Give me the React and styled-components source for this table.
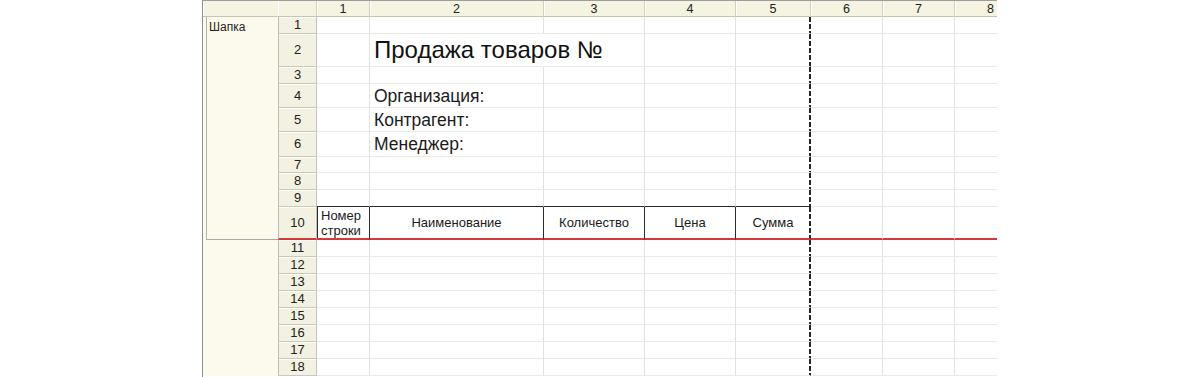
import React from 'react';
import styled, { createGlobalStyle, css } from 'styled-components';

const GlobalStyle = createGlobalStyle`
  *, *::before, *::after { box-sizing: border-box; }
  html, body { margin: 0; padding: 0; background: #ffffff; }
  body { font-family: "Liberation Sans", Arial, sans-serif; }
`;

const GRID_V = '#e2e2e2';
const GRID_H = '#eaeaea';
const TABLE = '#2b2b2b';
const RED = '#d23a3a';

const Page = styled.div`
  display: flex;
  padding-left: 202px;
  height: 377px;
  overflow: hidden;
`;

const Sheet = styled.div`
  width: 795px;
  height: 377px;
  overflow: hidden;
  display: grid;
  grid-template-columns: 75px 39px 53px 174px 101px 91px 75px 72px 72px 72px;
  grid-template-rows: ${(p) => p.$rows};
  border-left: 1px solid #8e8e8e;
  border-top: 1px solid #9c9c9c;
  font-family: "Liberation Sans", Arial, sans-serif;
  color: #1b1b1b;
`;

const HeadCell = styled.div`
  display: flex;
  align-items: center;
  justify-content: center;
  background: #f5f3e1;
  border-bottom: 1px solid #c6c3ae;
  border-right: 1px solid ${(p) => (p.$plain ? '#f5f3e1' : '#d3d0bb')};
  box-shadow: inset 1px 0 0 #ffffff;
  font-size: 12.5px;
  line-height: 14px;
  color: #222;
  white-space: nowrap;
  overflow: hidden;
`;

const GroupCell = styled.div`
  grid-column: 1;
  grid-row: ${(p) => p.$rows};
  display: flex;
  background: #fcfaec;
  padding-left: 3px;
`;

const GroupFrame = styled.div`
  flex: 1;
  border-left: 1px solid #b3b3b3;
  border-bottom: 1px solid #a9a9a9;
  padding: 3px 2px;
  font-size: 12px;
  line-height: 14px;
  color: #222;
`;

const RowHead = styled.div`
  grid-column: 2;
  display: flex;
  align-items: center;
  justify-content: center;
  background: #f3f1e1;
  border-left: 1px solid #bdbdbd;
  border-right: 1px solid #c2c2c2;
  border-bottom: ${(p) => (p.$red ? `2px solid ${RED}` : '1px solid #cbc8b6')};
  box-shadow: inset 0 1px 0 #ffffff;
  font-size: 13px;
  line-height: 14px;
  color: #222;
`;

const Cell = styled.div`
  display: flex;
  align-items: center;
  justify-content: ${(p) => (p.$center ? 'center' : 'flex-start')};
  text-align: ${(p) => (p.$center ? 'center' : 'left')};
  padding: 0 4px;
  white-space: nowrap;
  min-width: 0;
  border-right: 1px solid ${(p) => p.$rightColor || GRID_V};
  border-bottom: ${(p) => (p.$red ? `2px solid ${RED}` : `1px solid ${p.$bottomColor || GRID_H}`)};
  ${(p) =>
    p.$dashed &&
    css`
      border-right-color: transparent;
      background-image: repeating-linear-gradient(
        to bottom,
        #262626 0 5px,
        transparent 5px 7px
      );
      background-size: 2px 100%;
      background-position: right top;
      background-repeat: no-repeat;
      background-origin: border-box;
    `}
  ${(p) =>
    p.$tableLeft &&
    css`
      box-shadow: inset 1px 0 0 ${TABLE};
    `}
`;

const Title = styled.span`
  font-size: 24px;
  line-height: 26px;
  color: #111;
`;

const Label = styled.span`
  font-size: 17.5px;
  line-height: 20px;
  color: #1b1b1b;
`;

const TableHead = styled.span`
  font-size: 13px;
  line-height: 15px;
  color: #1b1b1b;
  white-space: normal;
`;

const ROWS = [
  { n: 1, h: 17 },
  { n: 2, h: 33, title: 'Продажа товаров №' },
  { n: 3, h: 17 },
  { n: 4, h: 24, label: 'Организация:' },
  { n: 5, h: 24, label: 'Контрагент:' },
  { n: 6, h: 25, label: 'Менеджер:' },
  { n: 7, h: 16 },
  { n: 8, h: 17 },
  { n: 9, h: 17, aboveTable: true },
  {
    n: 10,
    h: 33,
    table: ['Номер\nстроки', 'Наименование', 'Количество', 'Цена', 'Сумма'],
  },
  ...Array.from({ length: 8 }, (_, i) => ({ n: 11 + i, h: 17 })),
];

const COLS = [1, 2, 3, 4, 5, 6, 7, 8];

function renderCell(row, col) {
  const key = `${row.n}-${col}`;
  const inTable = col <= 5;
  const props = {};
  if (col === 5) props.$dashed = true;

  if (row.aboveTable && inTable) props.$bottomColor = TABLE;

  if (row.table) {
    props.$red = true;
    if (inTable) {
      if (col !== 5) props.$rightColor = TABLE;
      if (col === 1) props.$tableLeft = true;
      const text = row.table[col - 1];
      if (col === 1) {
        return (
          <Cell key={key} {...props}>
            <TableHead>
              {text.split('\n').map((t, i) => (
                <React.Fragment key={i}>
                  {i > 0 && <br />}
                  {t}
                </React.Fragment>
              ))}
            </TableHead>
          </Cell>
        );
      }
      return (
        <Cell key={key} $center {...props}>
          <TableHead>{text}</TableHead>
        </Cell>
      );
    }
    return <Cell key={key} {...props} />;
  }

  if (row.title && col === 2) {
    return (
      <Cell key={key} {...props} $rightColor="transparent">
        <Title>{row.title}</Title>
      </Cell>
    );
  }
  if (row.label && col === 2) {
    return (
      <Cell key={key} {...props}>
        <Label>{row.label}</Label>
      </Cell>
    );
  }
  return <Cell key={key} {...props} />;
}

export default function App() {
  const rowTemplate = ['16px', ...ROWS.map((r) => `${r.h}px`)].join(' ');
  return (
    <>
      <GlobalStyle />
      <Page>
        <Sheet $rows={rowTemplate}>
          <HeadCell $plain style={{ gridColumn: 1 }} />
          <HeadCell />
          {COLS.map((c) => (
            <HeadCell key={`h${c}`}>{c}</HeadCell>
          ))}
          <GroupCell $rows="2 / span 10">
            <GroupFrame>Шапка</GroupFrame>
          </GroupCell>
          <GroupCell $rows="12 / -1" />
          {ROWS.map((row) => (
            <React.Fragment key={row.n}>
              <RowHead $red={!!row.table}>{row.n}</RowHead>
              {COLS.map((c) => renderCell(row, c))}
            </React.Fragment>
          ))}
        </Sheet>
      </Page>
    </>
  );
}
